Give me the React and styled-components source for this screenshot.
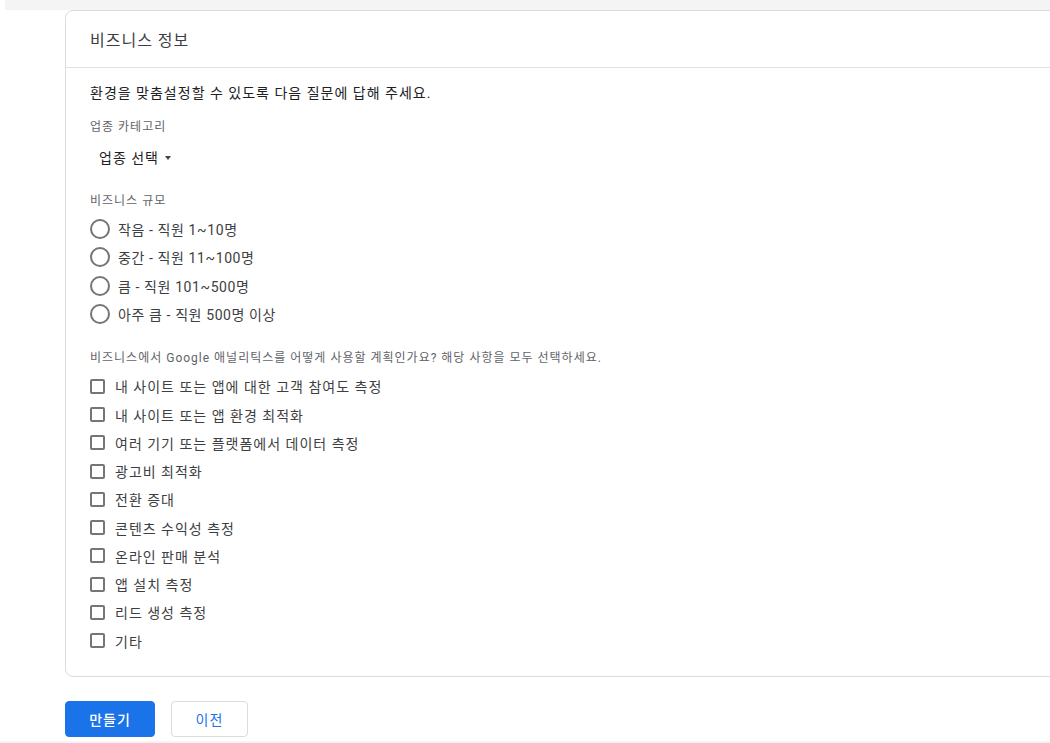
import React from 'react';
import styled, { createGlobalStyle } from 'styled-components';

const GlobalStyle = createGlobalStyle`
  html, body {
    margin: 0;
    padding: 0;
    background: #fff;
    overflow: hidden;
  }
  body {
    font-family: Roboto, 'Noto Sans CJK KR', 'Noto Sans', sans-serif;
    color: #202124;
    letter-spacing: 1px;
  }
`;

const Page = styled.div`
  width: 1050px;
  height: 743px;
  overflow: hidden;
  display: flex;
  flex-direction: column;
`;

const TopStrip = styled.div`
  height: 10px;
  margin-left: 5px;
  background: #f4f4f4;
  flex-shrink: 0;
`;

const Content = styled.div`
  padding-left: 65px;
  flex: 1;
  display: flex;
  flex-direction: column;
`;

const Card = styled.div`
  width: 1000px;
  border: 1px solid #dadce0;
  border-radius: 8px;
  background: #fff;
  box-sizing: border-box;
`;

const CardHeader = styled.div`
  height: 56px;
  display: flex;
  align-items: center;
  padding: 0 24px;
  font-size: 16px;
  color: #3c4043;
  border-bottom: 1px solid #e0e0e0;
`;

const CardBody = styled.div`
  padding: 15px 24px 21px;
  display: flex;
  flex-direction: column;
`;

const Intro = styled.div`
  font-size: 14px;
  line-height: 20px;
  color: #202124;
`;

const FieldLabel = styled.div`
  font-size: 12px;
  line-height: 16px;
  color: #5f6368;
  margin-top: ${props => props.top || '16px'};
`;

const Dropdown = styled.button`
  align-self: flex-start;
  display: flex;
  align-items: center;
  gap: 6px;
  margin-top: 12px;
  padding: 0 9px;
  height: 20px;
  border: none;
  background: none;
  font-family: inherit;
  font-size: 14px;
  letter-spacing: 1px;
  color: #202124;
  cursor: pointer;
`;

const Caret = styled.span`
  width: 0;
  height: 0;
  border-left: 3.5px solid transparent;
  border-right: 3.5px solid transparent;
  border-top: 4px solid #444;
  margin-top: 2px;
`;

const OptionList = styled.div`
  display: flex;
  flex-direction: column;
  margin-top: 6px;
`;

const Option = styled.label`
  display: flex;
  align-items: center;
  height: ${props => props.rowHeight};
  font-size: 14px;
  color: #3c4043;
  letter-spacing: ${props => props.spacing || '1px'};
  cursor: pointer;
`;

const RadioMark = styled.span`
  width: 20px;
  height: 20px;
  box-sizing: border-box;
  border: 2px solid #757575;
  border-radius: 50%;
  margin-right: 8px;
  flex-shrink: 0;
`;

const CheckMark = styled.span`
  width: 15px;
  height: 15px;
  box-sizing: border-box;
  border: 2px solid #757575;
  border-radius: 2px;
  margin-right: 10px;
  flex-shrink: 0;
`;

const Actions = styled.div`
  display: flex;
  gap: 16px;
  margin-top: 24px;
`;

const Button = styled.button`
  height: 36px;
  width: ${props => props.width};
  border-radius: 4px;
  font-family: inherit;
  font-size: 14px;
  letter-spacing: 1px;
  font-weight: ${props => props.primary ? 500 : 400};
  background: ${props => props.primary ? '#1a73e8' : '#fff'};
  color: ${props => props.primary ? '#fff' : '#1a73e8'};
  border: 1px solid ${props => props.primary ? '#1a73e8' : '#dadce0'};
  cursor: pointer;
`;

const BottomStrip = styled.div`
  margin-top: 4px;
  height: 10px;
  background: #f4f4f4;
  flex-shrink: 0;
`;

const sizes = [
  '작음 - 직원 1~10명',
  '중간 - 직원 11~100명',
  '큼 - 직원 101~500명',
  '아주 큼 - 직원 500명 이상',
];

const uses = [
  '내 사이트 또는 앱에 대한 고객 참여도 측정',
  '내 사이트 또는 앱 환경 최적화',
  '여러 기기 또는 플랫폼에서 데이터 측정',
  '광고비 최적화',
  '전환 증대',
  '콘텐츠 수익성 측정',
  '온라인 판매 분석',
  '앱 설치 측정',
  '리드 생성 측정',
  '기타',
];

export default function App() {
  return (
    <Page>
      <GlobalStyle />
      <TopStrip />
      <Content>
        <Card>
          <CardHeader>비즈니스 정보</CardHeader>
          <CardBody>
            <Intro>환경을 맞춤설정할 수 있도록 다음 질문에 답해 주세요.</Intro>
            <FieldLabel>업종 카테고리</FieldLabel>
            <Dropdown>
              업종 선택 <Caret />
            </Dropdown>
            <FieldLabel top="26px">비즈니스 규모</FieldLabel>
            <OptionList>
              {sizes.map(s => (
                <Option key={s} rowHeight="28.33px" spacing="0.6px">
                  <RadioMark />
                  {s}
                </Option>
              ))}
            </OptionList>
            <FieldLabel top="22px">
              비즈니스에서 Google 애널리틱스를 어떻게 사용할 계획인가요? 해당 사항을 모두 선택하세요.
            </FieldLabel>
            <OptionList>
              {uses.map(u => (
                <Option key={u} rowHeight="28.25px">
                  <CheckMark />
                  {u}
                </Option>
              ))}
            </OptionList>
          </CardBody>
        </Card>
        <Actions>
          <Button primary width="90px">만들기</Button>
          <Button width="77px">이전</Button>
        </Actions>
      </Content>
      <BottomStrip />
    </Page>
  );
}
